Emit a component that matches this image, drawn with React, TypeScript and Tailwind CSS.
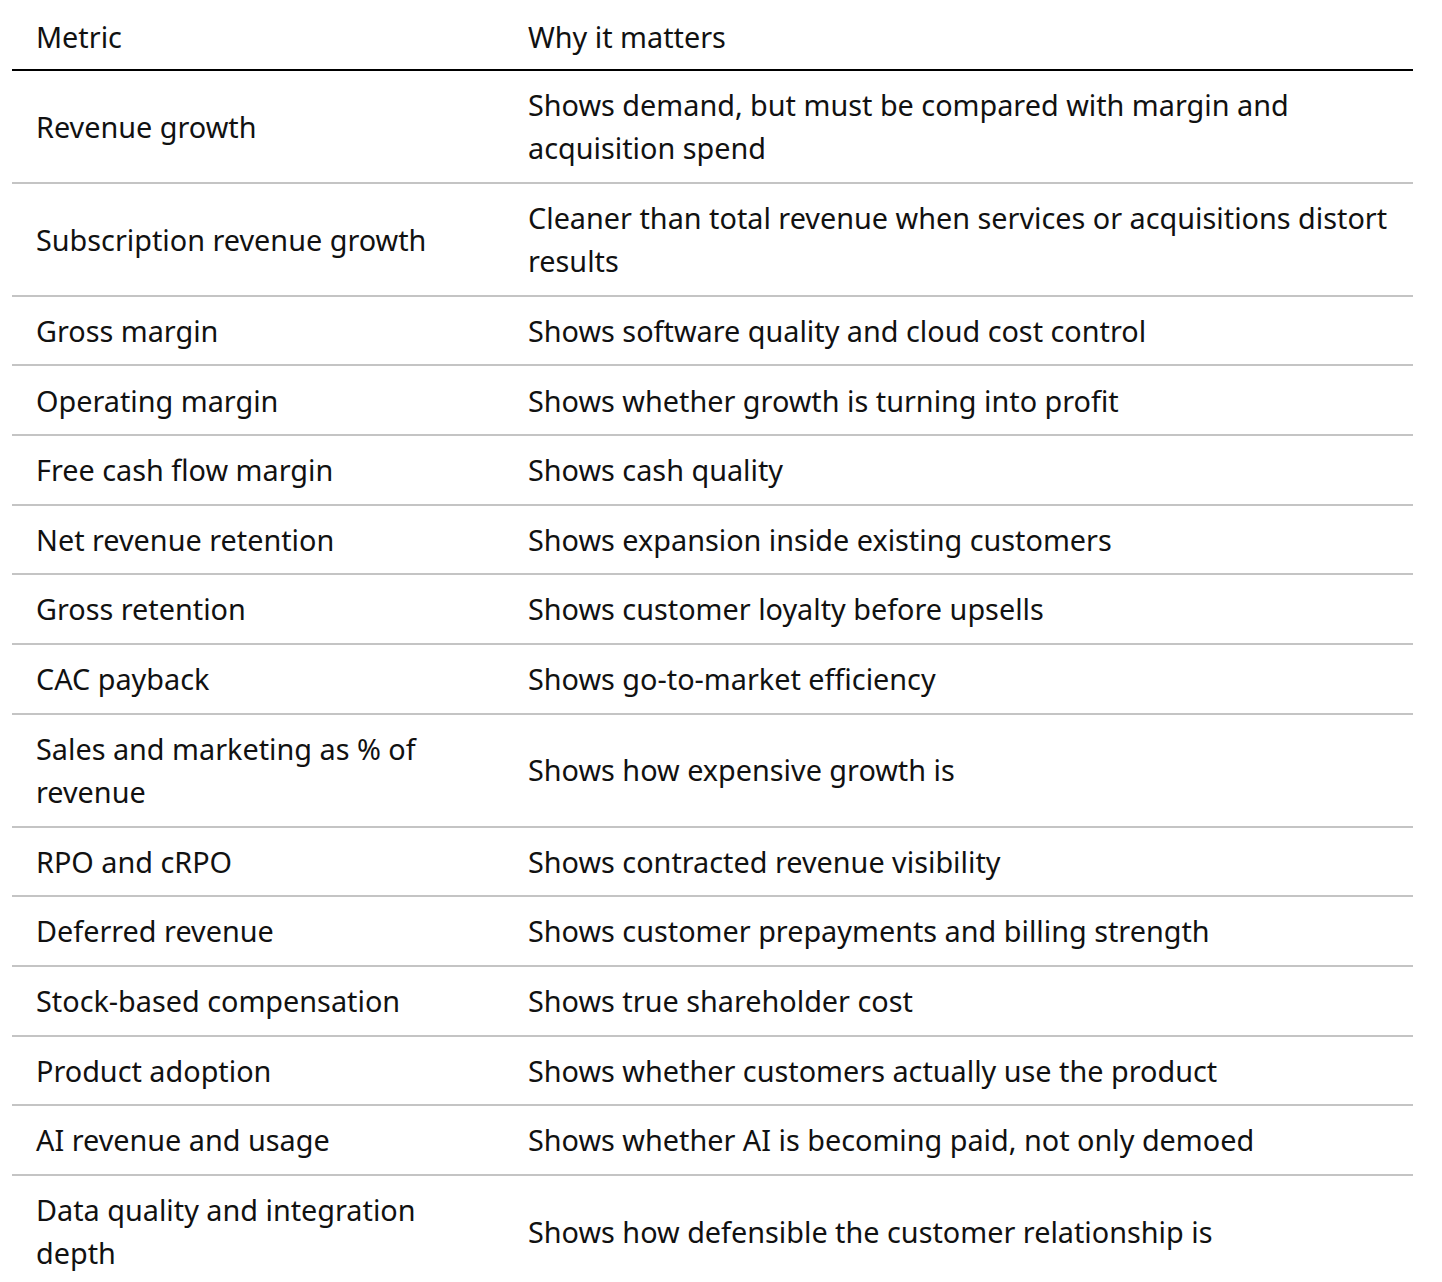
const rows: [string, string][] = [
  ["Revenue growth", "Shows demand, but must be compared with margin and acquisition spend"],
  ["Subscription revenue growth", "Cleaner than total revenue when services or acquisitions distort results"],
  ["Gross margin", "Shows software quality and cloud cost control"],
  ["Operating margin", "Shows whether growth is turning into profit"],
  ["Free cash flow margin", "Shows cash quality"],
  ["Net revenue retention", "Shows expansion inside existing customers"],
  ["Gross retention", "Shows customer loyalty before upsells"],
  ["CAC payback", "Shows go-to-market efficiency"],
  ["Sales and marketing as % of revenue", "Shows how expensive growth is"],
  ["RPO and cRPO", "Shows contracted revenue visibility"],
  ["Deferred revenue", "Shows customer prepayments and billing strength"],
  ["Stock-based compensation", "Shows true shareholder cost"],
  ["Product adoption", "Shows whether customers actually use the product"],
  ["AI revenue and usage", "Shows whether AI is becoming paid, not only demoed"],
  ["Data quality and integration depth", "Shows how defensible the customer relationship is"],
];

export default function App() {
  return (
    <div className="min-h-screen bg-white pl-[12px] pt-[1px] font-['Noto_Sans',sans-serif] text-[28.8px] leading-[43.4px] text-[#111]">
      <table className="w-[1401px] table-fixed border-collapse text-left">
        <colgroup>
          <col className="w-[492px]" />
          <col />
        </colgroup>
        <thead>
          <tr className="border-b-2 border-black">
            <th className="px-6 pt-[14px] pb-[10.4px] font-normal">Metric</th>
            <th className="pt-[14px] pb-[10.4px] pl-6 pr-3 font-normal">Why it matters</th>
          </tr>
        </thead>
        <tbody>
          {rows.map(([metric, why]) => (
            <tr key={metric} className="border-b-2 border-[#c4c4c4]">
              <td className="px-6 py-[12.12px] align-middle">{metric}</td>
              <td className="py-[12.12px] pl-6 pr-3 align-middle">{why}</td>
            </tr>
          ))}
        </tbody>
      </table>
    </div>
  );
}
